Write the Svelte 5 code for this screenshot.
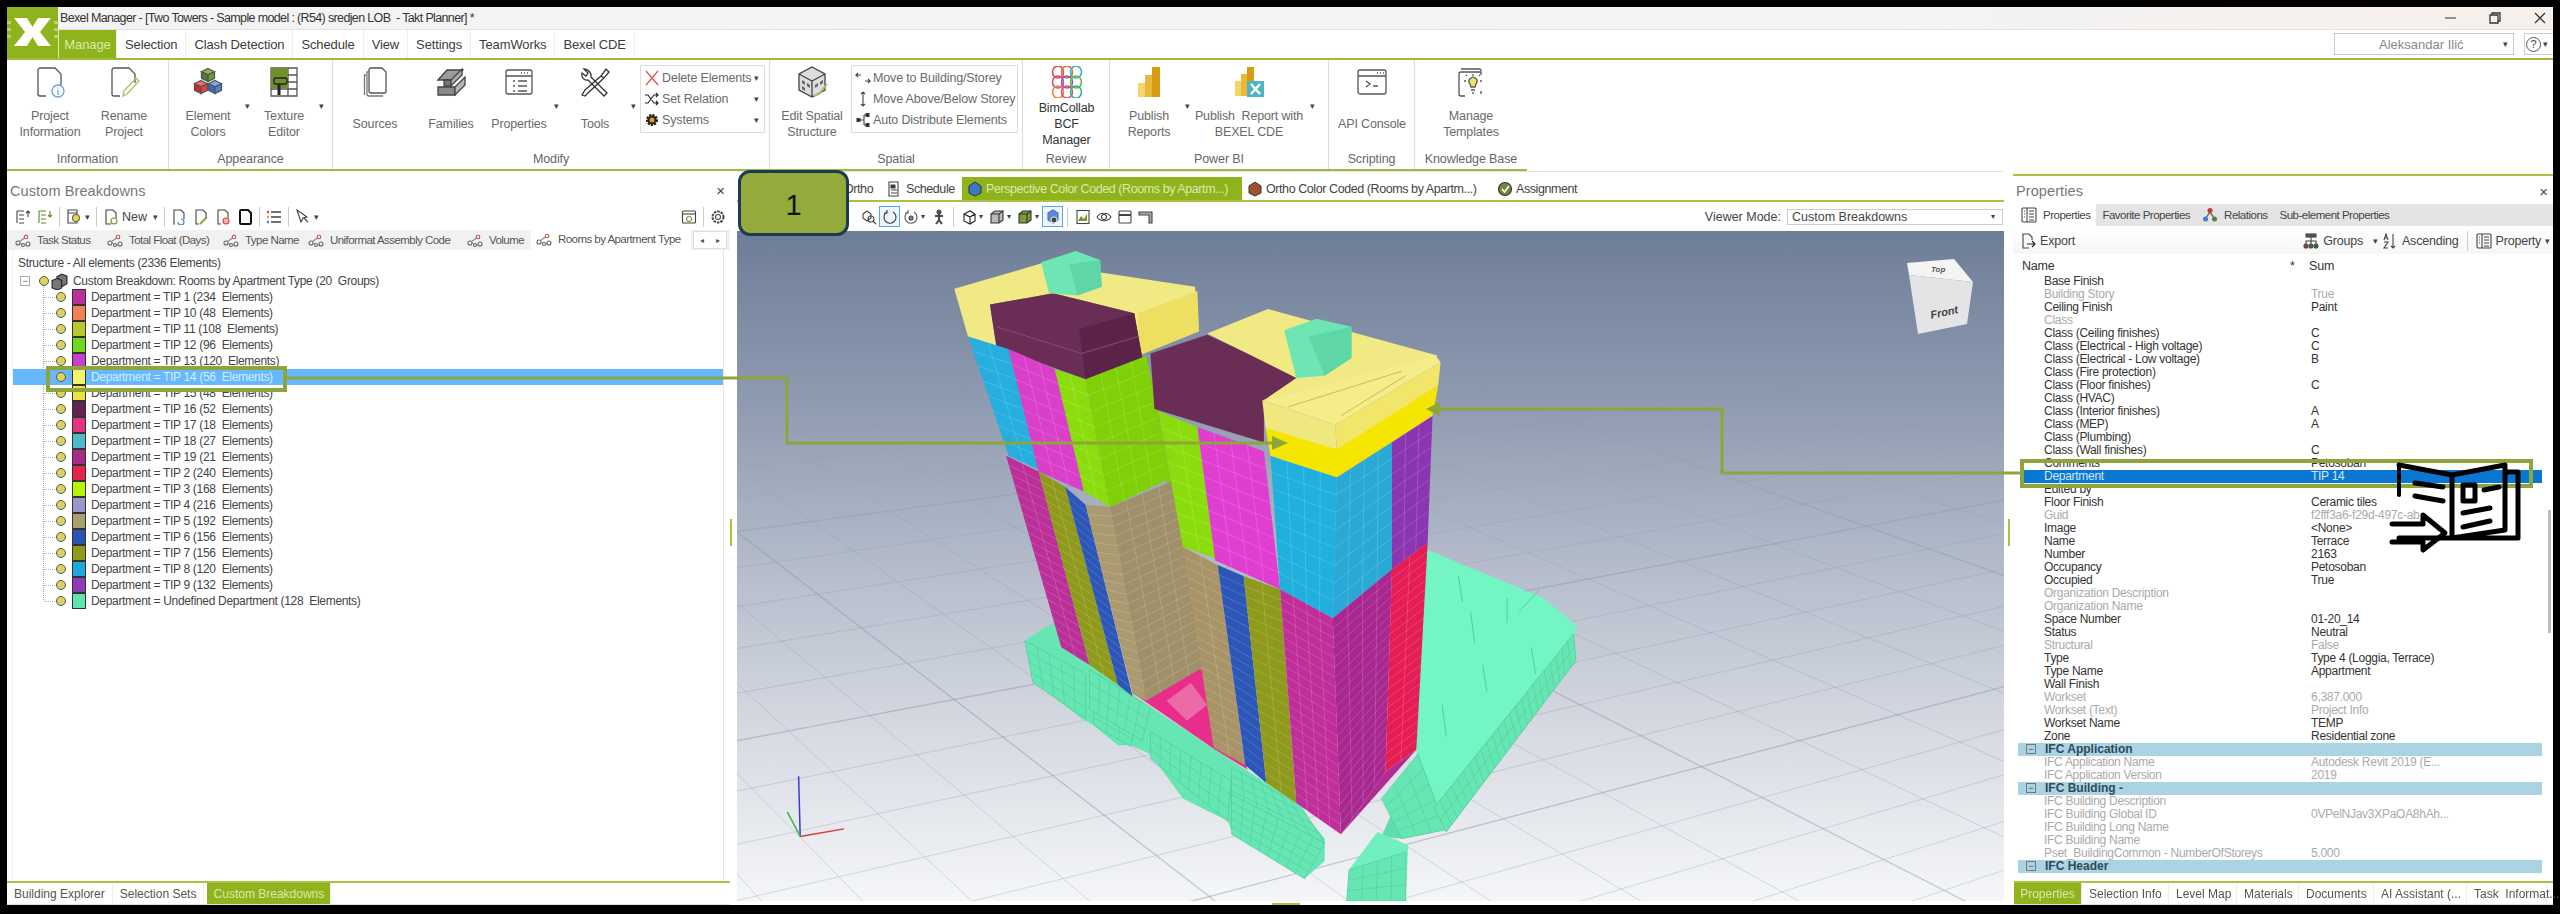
<script lang="ts">
	const mainTabs = ['Selection', 'Clash Detection', 'Schedule', 'View', 'Settings', 'TeamWorks', 'Bexel CDE'];

	// ribbon groups: w = group width, pad = left padding, items = buttons / carets / small-button boxes
	const groups = [
		{ name: 'Information', w: 162, pad: 6, items: [
			{ icon: 'info', label: ['Project', 'Information'], w: 74 },
			{ icon: 'rename', label: ['Rename', 'Project'], w: 74 }
		] },
		{ name: 'Appearance', w: 164, pad: 3, items: [
			{ icon: 'cubes', label: ['Element', 'Colors'], w: 72, caret: 6 },
			{ icon: 'texture', label: ['Texture', 'Editor'], w: 68, caret: 6 }
		] },
		{ name: 'Modify', w: 437, pad: 12, items: [
			{ icon: 'sources', label: ['Sources'], w: 60, ml: 0 },
			{ icon: 'families', label: ['Families'], w: 72, ml: 10 },
			{ icon: 'props', label: ['Properties'], w: 64, caret: 10 },
			{ icon: 'tools', label: ['Tools'], w: 68, caret: 8 },
			{ box: 125, ml: 3, rows: [['del', 'Delete Elements', true], ['rel', 'Set Relation', true], ['sys', 'Systems', true]] }
		] },
		{ name: 'Spatial', w: 253, pad: 3, items: [
			{ icon: 'spatial', label: ['Edit Spatial', 'Structure'], w: 78 },
			{ box: 167, rows: [['mv1', 'Move to Building/Storey'], ['mv2', 'Move Above/Below Storey'], ['mv3', 'Auto Distribute Elements']] }
		] },
		{ name: 'Review', w: 87, pad: 0, items: [
			{ icon: 'bim', label: ['BimCollab', 'BCF', 'Manager'], w: 87, dark: true }
		] },
		{ name: 'Power BI', w: 219, pad: 3, items: [
			{ icon: 'pbi', label: ['Publish', 'Reports'], w: 72, caret: 5 },
			{ icon: 'pbix', label: ['Publish  Report with', 'BEXEL CDE'], w: 118, caret: 8 }
		] },
		{ name: 'Scripting', w: 86, pad: 0, items: [{ icon: 'api', label: ['API Console'], w: 86 }] },
		{ name: 'Knowledge Base', w: 112, pad: 0, items: [{ icon: 'tmpl', label: ['Manage', 'Templates'], w: 112 }] }
	];

	const breakTabs = [
		{ t: 'Task Status', w: 92 },
		{ t: 'Total Float (Days)', w: 116 },
		{ t: 'Type Name', w: 85 },
		{ t: 'Uniformat Assembly Code', w: 159 },
		{ t: 'Volume', w: 62 }
	];

	const tree = [
		['TIP 1 (234  Elements)', '#b92f9c'], ['TIP 10 (48  Elements)', '#ef8354'], ['TIP 11 (108  Elements)', '#bcc72b'],
		['TIP 12 (96  Elements)', '#71d821'], ['TIP 13 (120  Elements)', '#c93fcb'], ['TIP 14 (56  Elements)', '#f3f26e'],
		['TIP 15 (48  Elements)', '#eee23c'], ['TIP 16 (52  Elements)', '#62254f'], ['TIP 17 (18  Elements)', '#e5317f'],
		['TIP 18 (27  Elements)', '#4cbccb'], ['TIP 19 (21  Elements)', '#a92b86'], ['TIP 2 (240  Elements)', '#e8234f'],
		['TIP 3 (168  Elements)', '#b5f500'], ['TIP 4 (216  Elements)', '#9a97cf'], ['TIP 5 (192  Elements)', '#ab9f6e'],
		['TIP 6 (156  Elements)', '#2b55b5'], ['TIP 7 (156  Elements)', '#8f9a1c'], ['TIP 8 (120  Elements)', '#1fa8dc'],
		['TIP 9 (132  Elements)', '#8f3db5'], ['Undefined Department (128  Elements)', '#5fe6ae']
	];

	// the first tab's caption sits under the "1" badge in the reference
	const viewTabs = [
		{ t: '', w: 83, i: '#7a8aa0' },
		{ t: 'Ortho', w: 62, i: '#7a8aa0' },
		{ t: 'Schedule', w: 80, i: 'sched' },
		{ t: 'Perspective Color Coded (Rooms by Apartm...)', w: 280, i: '#3a78c8', on: true },
		{ t: 'Ortho Color Coded (Rooms by Apartm...)', w: 250, i: '#a0522d' },
		{ t: 'Assignment', w: 90, i: 'assign' }
	];

	// name, value, dim; null value = empty
	const props = [
		['Base Finish', ''], ['Building Story', 'True', 1], ['Ceiling Finish', 'Paint'], ['Class', '', 1],
		['Class (Ceiling finishes)', 'C'], ['Class (Electrical - High voltage)', 'C'], ['Class (Electrical - Low voltage)', 'B'],
		['Class (Fire protection)', ''], ['Class (Floor finishes)', 'C'], ['Class (HVAC)', ''], ['Class (Interior finishes)', 'A'],
		['Class (MEP)', 'A'], ['Class (Plumbing)', ''], ['Class (Wall finishes)', 'C'], ['Comments', 'Petosoban'],
		['Department', 'TIP 14', 2], ['Edited by', ''], ['Floor Finish', 'Ceramic tiles'], ['Guid', 'f2fff3a6-f29d-497c-ab...', 1],
		['Image', '<None>'], ['Name', 'Terrace'], ['Number', '2163'], ['Occupancy', 'Petosoban'], ['Occupied', 'True'],
		['Organization Description', '', 1], ['Organization Name', '', 1], ['Space Number', '01-20_14'], ['Status', 'Neutral'],
		['Structural', 'False', 1], ['Type', 'Type 4 (Loggia, Terrace)'], ['Type Name', 'Appartment'], ['Wall Finish', ''],
		['Workset', '6,387.000', 1], ['Workset (Text)', 'Project Info', 1], ['Workset Name', 'TEMP'], ['Zone', 'Residential zone'],
		['IFC Application', '', 3], ['IFC Application Name', 'Autodesk Revit 2019 (E...', 1], ['IFC Application Version', '2019', 1],
		['IFC Building -', '', 3], ['IFC Building Description', '', 1], ['IFC Building Global ID', '0VPelNJav3XPaOA8hAh...', 1],
		['IFC Building Long Name', '', 1], ['IFC Building Name', '', 1], ['Pset_BuildingCommon - NumberOfStoreys', '5.000', 1],
		['IFC Header', '', 3]
	];

	const propTabs = [
		{ t: 'Selection Info', w: 87 }, { t: 'Level Map', w: 68 }, { t: 'Materials', w: 62 },
		{ t: 'Documents', w: 75 }, { t: 'AI Assistant (...', w: 93 }, { t: 'Task  Informat...', w: 80 }
	];

	// 3D model, in a 1563 x 1505 drawing space squeezed to the viewport
	const podium = [
		{ q: [[365, 945], [440, 1020], [440, 1120], [375, 1040]], nu: 5, nv: 4 },
		{ q: [[450, 1100], [500, 1150], [495, 1182], [450, 1135]], nu: 3, nv: 2 },
		{ q: [[445, 1010], [520, 1095], [510, 1170], [445, 1100]], nu: 6, nv: 3 },
		{ q: [[520, 1150], [620, 1260], [615, 1350], [520, 1210]], nu: 8, nv: 3 },
		{ q: [[620, 1230], [705, 1315], [735, 1400], [620, 1300]], nu: 7, nv: 4 },
		{ q: [[620, 1290], [735, 1400], [710, 1480], [620, 1380]], nu: 8, nv: 5 },
		{ q: [[805, 1300], [850, 1200], [885, 1370], [830, 1390]], nu: 3, nv: 5 },
		{ q: [[870, 1320], [1042, 930], [1045, 990], [885, 1375]], nu: 24, nv: 2 },
		{ q: [[765, 1460], [835, 1420], [835, 1530], [762, 1530]], nu: 4, nv: 3 }
	];
	const facades = [
		{ q: [[295, 262], [345, 290], [382, 560], [345, 530]], c: '#25aede', nu: 2, nv: 8 },
		{ q: [[345, 290], [402, 335], [438, 610], [382, 565]], c: '#d93fc8', nu: 3, nv: 8 },
		{ q: [[402, 335], [440, 358], [470, 645], [438, 610]], c: '#8bdc0c', nu: 2, nv: 8 },
		{ q: [[440, 358], [515, 305], [540, 585], [470, 645]], c: '#7fd006', nu: 4, nv: 8 },
		{ q: [[342, 530], [382, 565], [445, 1000], [410, 960]], c: '#bb2f98', nu: 2, nv: 20 },
		{ q: [[382, 565], [415, 600], [480, 1045], [445, 1000]], c: '#8f9a1c', nu: 2, nv: 20 },
		{ q: [[415, 600], [440, 640], [498, 1070], [480, 1045]], c: '#2c57b8', nu: 1, nv: 20 },
		{ q: [[440, 640], [470, 645], [515, 1080], [498, 1065]], c: '#ab9a70', nu: 1, nv: 20 },
		{ q: [[470, 645], [550, 585], [585, 1005], [515, 1080]], c: '#a0906a', nu: 4, nv: 20 },
		{ q: [[530, 430], [578, 465], [600, 760], [560, 735]], c: '#8bdc0c', nu: 2, nv: 8 },
		{ q: [[578, 465], [660, 520], [680, 830], [600, 765]], c: '#e03ed0', nu: 4, nv: 8 },
		{ q: [[560, 735], [603, 775], [637, 1225], [598, 1185]], c: '#a99468', nu: 2, nv: 20 },
		{ q: [[603, 775], [635, 800], [663, 1265], [637, 1225]], c: '#2c57b8', nu: 1, nv: 20 },
		{ q: [[635, 800], [680, 830], [700, 1310], [663, 1265]], c: '#8f9a1c', nu: 2, nv: 20 },
		{ q: [[668, 530], [750, 578], [745, 895], [680, 830]], c: '#1fb0de', nu: 4, nv: 8 },
		{ q: [[750, 578], [818, 500], [818, 785], [745, 895]], c: '#2aa9d6', nu: 4, nv: 8 },
		{ q: [[818, 500], [868, 440], [862, 725], [818, 785]], c: '#8b35b0', nu: 3, nv: 8 },
		{ q: [[680, 830], [745, 895], [755, 1380], [700, 1310]], c: '#c02e9a', nu: 4, nv: 22 },
		{ q: [[745, 895], [818, 785], [810, 1240], [755, 1380]], c: '#a8288f', nu: 4, nv: 22 },
		{ q: [[818, 785], [862, 725], [848, 1190], [810, 1240]], c: '#e51d55', nu: 2, nv: 22 }
	];
	const lerp = (a: number[], b: number[], t: number) => [a[0] + (b[0] - a[0]) * t, a[1] + (b[1] - a[1]) * t];
	const quadLines = (f: any) => {
		const out: number[][][] = [];
		const [a, b, c, d] = f.q;
		for (let i = 1; i < f.nu; i++) out.push([lerp(a, b, i / f.nu), lerp(d, c, i / f.nu)]);
		for (let j = 1; j < f.nv; j++) out.push([lerp(a, d, j / f.nv), lerp(b, c, j / f.nv)]);
		return out;
	};
	const pts = (q: number[][]) => q.map((p) => p.join(',')).join(' ');

	const floor: number[][] = [];
	for (let i = 0; i < 26; i++) floor.push([10, 240 + i * 14 + i * i * 3.2, 4684, -447, i % 5 === 0 ? 1 : 0]);
	for (let i = 0; i < 26; i++) floor.push([-500 + i * 60 + i * i * 5, 1530, -1200, -1000, i % 5 === 0 ? 1 : 0]);
</script>

{#snippet cube(x: number, y: number, s: number, top: string, left: string, right: string)}
	<polygon points="{x},{y - s} {x + s},{y - s / 2} {x},{y} {x - s},{y - s / 2}" fill={top} />
	<polygon points="{x - s},{y - s / 2} {x},{y} {x},{y + s} {x - s},{y + s / 2}" fill={left} />
	<polygon points="{x + s},{y - s / 2} {x},{y} {x},{y + s} {x + s},{y + s / 2}" fill={right} />
{/snippet}

{#snippet ico(name: string)}
	<svg viewBox="0 0 32 32" class="ico" fill="none" stroke="#555" stroke-width="1.3">
		{#if name === 'info'}
			<path d="M12 30H6a2 2 0 0 1-2-2V4a2 2 0 0 1 2-2h15l6 6v11" />
			<circle cx="24" cy="25" r="6" stroke="#6d9fe4" />
			<path d="M24 24v5M24 21.5v1" stroke="#6d9fe4" />
		{:else if name === 'rename'}
			<path d="M12 30H6a2 2 0 0 1-2-2V4a2 2 0 0 1 2-2h15l6 6v9" />
			<path d="M15 30l1-5 12-13 3 3-12 13z" stroke="#a9bd6a" />
		{:else if name === 'cubes'}
			{@render cube(16, 9, 6.5, '#8db25a', '#55782f', '#6d9640')}
			{@render cube(9, 21, 6.5, '#f46a6a', '#d12a2a', '#e83f3f')}
			{@render cube(23, 21, 6.5, '#7aa9ef', '#3a6bc4', '#4f82da')}
		{:else if name === 'texture'}
			<path d="M3 2h26v28H3zM3 9h26M3 16h26M3 23h26M20 2v28" />
			<rect x="3" y="2" width="17" height="20" fill="#6f8f2c" stroke="none" />
			<rect x="6" y="12" width="13" height="6" rx="2" stroke="#222" />
			<path d="M11 18v11" stroke="#222" stroke-width="3" />
		{:else if name === 'sources'}
			<path d="M12 2h11l4 4v20a1 1 0 0 1-1 1H12a2 2 0 0 1-2-2V4a2 2 0 0 1 2-2z" />
			<path d="M10 6H8v22a2 2 0 0 0 2 2h14M7 9H5.500v20" stroke="#777" />
		{:else if name === 'families'}
			<polygon points="3,14 12,4 28,4 20,14" fill="#9c9c9c" stroke="#444" />
			<polygon points="9,14 16,14 16,20 9,20" fill="#777" stroke="#444" />
			<polygon points="16,14 27,3 27,9 16,20" fill="#aaa" stroke="#444" />
			<polygon points="3,21 20,21 20,29 3,29" fill="#8a8a8a" stroke="#444" />
			<polygon points="20,21 30,11 30,19 20,29" fill="#b5b5b5" stroke="#444" />
		{:else if name === 'props'}
			<rect x="3" y="4" width="26" height="24" rx="2" />
			<path d="M3 10h26M21 7h1M24 7h1M18 7h1M10 15h2M15 15h9M10 20h2M15 20h9M10 25h2M15 25h9" />
		{:else if name === 'tools'}
			<path d="M5 3l4 4-2 3-4-3c-1 4 2 8 6 7l16 16 3-3L12 11c1-4-3-8-7-8z" stroke="#333" />
			<path d="M27 3l3 3-5 6-3-2zM22 10L6 24l-3 5 3 1 4-4 15-14" stroke="#333" />
		{:else if name === 'spatial'}
			<polygon points="16,1 29,8 29,24 16,31 3,24 3,8" fill="#ddd" stroke="#444" />
			<path d="M3 8l13 7 13-7M16 15v16" stroke="#444" />
			<path d="M6 14l3 2v3l-3-2zM11 17l3 2v3l-3-2zM6 20l3 2v3l-3-2zM19 19l3-2v3l-3 2zM24 16l3-2v3l-3 2z" fill="#666" stroke="none" />
			<path d="M18 30l5-2 8-10" stroke="#a9bd6a" stroke-width="2" />
		{:else if name === 'bim'}
			{#each [[7, 6, '#e04a3a'], [16, 6, '#e86a3a'], [25, 6, '#35b2c2'], [7, 16, '#d6477f'], [16, 16, '#7f5bb8'], [25, 16, '#65b84a'], [7, 26, '#e8873a'], [16, 26, '#e04a7f'], [25, 26, '#3ab57a']] as c}
				<ellipse cx={c[0]} cy={c[1]} rx="5.500" ry="6" stroke={c[2]} stroke-width="1.6" />
			{/each}
		{:else if name === 'pbi'}
			<rect x="5" y="17" width="8" height="14" fill="#f2d56b" stroke="none" />
			<rect x="12" y="9" width="8" height="22" fill="#e8b83a" stroke="none" />
			<rect x="19" y="1" width="8" height="30" fill="#d99a14" stroke="none" />
		{:else if name === 'pbix'}
			<rect x="2" y="15" width="7" height="15" fill="#f2d56b" stroke="none" />
			<rect x="8" y="8" width="7" height="22" fill="#e8b83a" stroke="none" />
			<rect x="14" y="1" width="7" height="22" fill="#d99a14" stroke="none" />
			<rect x="14" y="15" width="17" height="16" fill="#4fb4bf" stroke="none" />
			<path d="M18 18l9 10M27 18l-9 10" stroke="#fff" stroke-width="2.500" />
		{:else if name === 'api'}
			<rect x="2" y="4" width="28" height="24" rx="2" />
			<path d="M2 10h28M21 7h1M24 7h1M27 7h1M10 15l4 3-4 3M17 20h5" />
		{:else if name === 'tmpl'}
			<path d="M6 3h18a2 2 0 0 1 2 2M4 8a2 2 0 0 1 2-2h20v3M4 8v20a2 2 0 0 0 2 2h4M26 25v3" />
			<path d="M15 18a4 4 0 1 1 6 0l-1 3h-4z" fill="#f0e26a" />
			<path d="M16 24h4M17 27h2M18 10V8M11 15H9M27 15h-2M12 10l-1-1M24 10l1-1" />
		{/if}
	</svg>
{/snippet}

{#snippet mini(name: string)}
	<svg viewBox="0 0 16 16" class="mini" fill="none" stroke="#444" stroke-width="1.100">
		{#if name === 'del'}
			<path d="M2 1l12 14M14 1L2 15" stroke="#e2574c" stroke-width="1.300" />
		{:else if name === 'rel'}
			<path d="M1 4h3l6 8h4M1 12h3l6-8h4M12 2l2 2-2 2M12 10l2 2-2 2" stroke="#222" />
		{:else if name === 'sys'}
			<circle cx="8" cy="8" r="4.500" fill="#222" stroke="#222" stroke-width="3" stroke-dasharray="2 1" />
			<circle cx="8" cy="8" r="2.500" fill="#e69a1e" stroke="none" />
		{:else if name === 'mv1'}
			<path d="M6 5H1l2-2M1 5l2 2M10 11h5l-2-2M15 11l-2 2" />
		{:else if name === 'mv2'}
			<path d="M8 1v14M8 1L6 3M8 1l2 2M8 15l-2-2M8 15l2-2" />
		{:else if name === 'mv3'}
			<path d="M5 8h4M9 3v10M9 3h3M9 13h3" />
			<rect x="2" y="6.500" width="3" height="3" fill="#222" />
			<rect x="11" y="1.500" width="3" height="3" fill="#222" />
			<rect x="11" y="11.500" width="3" height="3" fill="#222" />
		{:else if name === 'graph'}
			<circle cx="3" cy="11" r="2" stroke="#666" />
			<circle cx="11" cy="5" r="1.800" stroke="#c0504d" />
			<circle cx="13" cy="12" r="2" stroke="#666" />
			<circle cx="8" cy="13" r="1.500" stroke="#666" />
			<path d="M4.500 9.500L9.500 6M5 11.500h1.500M9.500 13H11" stroke="#888" />
		{:else if name === 'expU'}
			<path d="M2 2h7M2 2v12M4 6h5M4 10h5M4 14h5M13 8V2M11 4l2-2 2 2" stroke="#444" />
		{:else if name === 'expD'}
			<path d="M2 2h7M2 2v12M4 6h5M4 10h5M4 14h5M13 2v6M11 6l2 2 2-2" stroke="#5a8a2a" />
		{:else if name === 'bulb'}
			<path d="M2 1h9v13H2zM2 4h9" />
			<circle cx="10" cy="9" r="3.500" fill="#e8d84a" stroke="#666" />
		{:else if name === 'docAdd'}
			<path d="M8 15H3V1h7l3 3v5" />
			<circle cx="11" cy="12" r="3" stroke="#6f9a2a" />
		{:else if name === 'docRef'}
			<path d="M4 15H3V1h7l3 3v6" />
			<path d="M7 13a3 3 0 1 0 3-3" stroke="#3a7ed0" />
		{:else if name === 'docEdit'}
			<path d="M6 15H3V1h7l3 3v6" />
			<path d="M7 15l7-7" stroke="#8aa83a" stroke-width="2" />
		{:else if name === 'docDel'}
			<path d="M6 15H3V1h7l3 3v5" />
			<circle cx="11" cy="12" r="3" stroke="#d94a3a" fill="#f6b6a8" />
		{:else if name === 'docBlack'}
			<path d="M4 1h7l3 3v10a1 1 0 0 1-1 1H4a1 1 0 0 1-1-1V2a1 1 0 0 1 1-1z" stroke="#111" stroke-width="2" />
		{:else if name === 'list'}
			<path d="M5 3h10M5 8h10M5 13h10" stroke="#444" stroke-width="1.600" />
			<path d="M1 3h2" stroke="#d94a3a" stroke-width="2.500" />
			<path d="M1 8h2" stroke="#e8a03a" stroke-width="2.500" />
			<path d="M1 13h2" stroke="#4a7ed0" stroke-width="2.500" />
		{:else if name === 'cursor'}
			<path d="M2 1l4 12 2-4 4-1z" />
			<path d="M9 9l4 4" />
		{:else if name === 'gear'}
			<circle cx="8" cy="8" r="5.500" stroke-dasharray="2.500 1" stroke-width="2" />
			<circle cx="8" cy="8" r="2.500" />
		{:else if name === 'win'}
			<rect x="1.500" y="2" width="13" height="12" rx="1" />
			<path d="M1.500 5h13" />
			<circle cx="8" cy="10" r="2.500" stroke="#7a9a3a" />
		{:else if name === 'export'}
			<path d="M12 7V4L9 1H3v14h6" />
			<path d="M7 11h8M12 8l3 3-3 3" stroke="#222" />
		{:else if name === 'groups'}
			<rect x="3" y="1" width="10" height="3" fill="#555" />
			<path d="M8 4v5M3 12V8h10v4M8 8v4" />
			<circle cx="3" cy="13" r="2" fill="#c0392b" />
			<circle cx="8" cy="13" r="2" fill="#2e7d32" />
			<circle cx="13" cy="13" r="2" fill="#555" />
		{:else if name === 'sort'}
			<path d="M2 7l2-6 2 6M3 5h2M2 9h4l-4 6h4M11 1v14M9 13l2 2 2-2" />
		{:else if name === 'propgrid'}
			<rect x="1" y="1" width="14" height="14" rx="1" />
			<path d="M6 1v14M3 4h1M3 7h1M3 10h1M8 4h5M8 7h5M8 10h5M8 13h5" />
		{:else if name === 'rels'}
			<path d="M8 5L4 11M8 5l4 6" />
			<circle cx="8" cy="3.500" r="2.500" fill="#c0392b" stroke="none" />
			<circle cx="3.500" cy="12" r="2.500" fill="#3a7ed0" stroke="none" />
			<circle cx="12.500" cy="12" r="2.500" fill="#4c8c2b" stroke="none" />
		{:else if name === 'sched'}
			<path d="M2 1h9v14H2z" />
			<path d="M4 4h4v3H4zM4 9h6M4 12h6" fill="#333" />
		{:else if name === 'assign'}
			<circle cx="8" cy="8" r="6.500" fill="#6e8a3a" stroke="#333" />
			<path d="M5 8l2.500 3L12 5" stroke="#fff" stroke-width="1.600" />
		{:else if name === 'mag'}
			<path d="M2 5l4-3 4 3v4l-4 3-4-3z" />
			<circle cx="10" cy="10" r="3" />
			<path d="M12 12l3 3" />
		{:else if name === 'rot'}
			<path d="M5 3a6 6 0 1 0 6 0M5 1v3H2" stroke="#333" />
		{:else if name === 'rot2'}
			<path d="M5 3a6 6 0 1 0 6 0M5 1v3H2" stroke="#555" />
			<circle cx="8" cy="9" r="2" fill="#888" />
		{:else if name === 'person'}
			<circle cx="8" cy="3" r="2" fill="#555" />
			<path d="M8 5v6M4 7h8M8 11l-3 4M8 11l3 4" stroke-width="2" />
		{:else if name === 'boxW'}
			<path d="M3 5l6-3 5 3v7l-5 3-6-3zM3 5l6 3 5-3M9 8v7" stroke="#222" />
		{:else if name === 'boxF'}
			<path d="M2 5l4-3h8v9l-4 3H2z" fill="#bbb" stroke="#333" />
			<path d="M2 5h8v9M10 5l4-3" stroke="#333" />
		{:else if name === 'boxG'}
			<path d="M2 5l4-3h8v9l-4 3H2z" fill="#7c9a3a" stroke="#333" />
			<path d="M2 5h8v9M10 5l4-3" stroke="#333" />
		{:else if name === 'hex'}
			<path d="M3 4l5-3 5 3v7l-5 3-5-3z" fill="#5a8ad8" stroke="#4a70b8" />
			<circle cx="9" cy="11" r="3" fill="#444" stroke="#ddd" />
		{:else if name === 'chart'}
			<rect x="2" y="1.500" width="12" height="13" />
			<path d="M3 12l3-5 3 3 3-5v7z" fill="#6f9a2a" stroke="none" />
		{:else if name === 'eye'}
			<path d="M1 8c3-5 11-5 14 0-3 5-11 5-14 0z" />
			<circle cx="8" cy="8" r="2.500" />
		{:else if name === 'panel'}
			<rect x="2" y="2" width="12" height="12" rx="1" />
			<path d="M2 6h12" stroke-width="2" />
		{:else if name === 'corner'}
			<path d="M1 3h13v11h-3V6H1z" fill="#aaa" />
		{/if}
	</svg>
{/snippet}

<div class="frame">
	<div class="window">
		<header class="head">
			<div class="logo">
				<svg viewBox="0 0 51 51" width="51" height="51">
					<path d="M0 14h4v3H0zM0 21h4v3H0zM0 28h4v3H0zM47 14h4v3h-4zM47 21h4v3h-4zM47 28h4v3h-4z" fill="#b9d36a" />
					<polygon points="7,11 20,11 25.500,20 31,11 44,11 33,25 44,39 31,39 25.500,30 20,39 7,39 18,25" fill="#fff" />
				</svg>
			</div>
			<div class="head-main">
				<div class="titlebar">
					<span class="title">Bexel Manager - [Two Towers - Sample model : (R54) sredjen LOB  - Takt Planner] *</span>
					<div class="winbtns">
						<svg viewBox="0 0 14 14" width="14" height="14"><path d="M2 7h11" stroke="#333" fill="none" /></svg>
						<svg viewBox="0 0 14 14" width="14" height="14"><path d="M2 4h8v8H2zM4 4V2h8v8h-2" stroke="#333" stroke-width="1.300" fill="none" /></svg>
						<svg viewBox="0 0 14 14" width="14" height="14"><path d="M2 2l10 10M12 2L2 12" stroke="#333" stroke-width="1.300" fill="none" /></svg>
					</div>
				</div>
				<div class="tabs-row">
					<span class="main-tab on">Manage</span>
					{#each mainTabs as t}
						<span class="main-tab">{t}</span>
					{/each}
					<div class="user">
						<span class="user-name">Aleksandar Ilić</span>
						<span class="caret">▾</span>
					</div>
					<div class="help"><span class="help-q">?</span><span class="caret">▾</span></div>
				</div>
			</div>
		</header>

		<div class="ribbon">
			{#each groups as g}
				<section class="group" style="width:{g.w}px">
					<div class="group-items" style="padding-left:{g.pad}px">
						{#each g.items as it}
							{#if it.box}
								<div class="smallbox" style="width:{it.box}px;margin-left:{it.ml ?? 0}px">
									{#each it.rows as r}
										<div class="small-row">
											{@render mini(r[0] as string)}
											<span class="small-text">{r[1]}</span>
											{#if r[2]}<span class="caret small-caret">▾</span>{/if}
										</div>
									{/each}
								</div>
							{:else}
								<div class="rib-btn" style="width:{it.w}px;margin-left:{it.ml ?? 0}px">
									<div class="rib-icon">{@render ico(it.icon as string)}</div>
									<div class="rib-label" class:dark={it.dark}>
										{#each it.label as l}<span>{l}</span>{/each}
									</div>
								</div>
								{#if it.caret}
									<span class="rib-caret" style="width:{it.caret}px">▾</span>
								{/if}
							{/if}
						{/each}
					</div>
					<div class="group-name">{g.name}</div>
				</section>
			{/each}
		</div>

		<main class="work">
			<aside class="left">
				<div class="panel-title">
					<span>Custom Breakdowns</span>
					<span class="close">×</span>
				</div>
				<div class="tb">
					{@render mini('expU')}
					{@render mini('expD')}
					<i class="sep"></i>
					{@render mini('bulb')}<span class="caret">▾</span>
					<i class="sep"></i>
					{@render mini('docAdd')}<span class="tb-text">New</span><span class="caret new-caret">▾</span>
					<i class="sep"></i>
					{@render mini('docRef')}
					{@render mini('docEdit')}
					{@render mini('docDel')}
					{@render mini('docBlack')}
					<i class="sep"></i>
					{@render mini('list')}
					<i class="sep"></i>
					{@render mini('cursor')}<span class="caret">▾</span>
					<span class="tb-fill"></span>
					{@render mini('win')}
					<i class="sep"></i>
					{@render mini('gear')}
				</div>
				<div class="break-tabs">
					{#each breakTabs as b}
						<span class="break-tab" style="width:{b.w}px">{@render mini('graph')}<span>{b.t}</span></span>
					{/each}
					<span class="break-tab active">{@render mini('graph')}<span>Rooms by Apartment Type</span></span>
					<span class="arrows"><b>◂</b><b>▸</b></span>
				</div>
				<div class="tree">
					<div class="tree-line"></div>
					<div class="row struct">Structure - All elements (2336 Elements)</div>
					<div class="row rootrow">
						<span class="minus">−</span>
						<span class="bulb"></span>
						<svg viewBox="0 0 16 16" width="17" height="17" class="stack"><path d="M1 7l5-2 4 2v7l-4 2-5-2z M5 4l5-3 5 2v7l-5 3" fill="#777" stroke="#222" /></svg>
						<span>Custom Breakdown: Rooms by Apartment Type (20  Groups)</span>
					</div>
					{#each tree as r, i}
						<div class="row leaf" class:sel={i === 5}>
							<span class="dots"></span>
							<span class="bulb"></span>
							<span class="swatch" style="background:{r[1]}"></span>
							<span>Department = {r[0]}</span>
						</div>
					{/each}
				</div>
				<nav class="bottom-tabs left-tabs">
					<span class="btab">Building Explorer</span>
					<span class="btab">Selection Sets</span>
					<span class="btab on">Custom Breakdowns</span>
				</nav>
			</aside>

			<div class="split"><i></i></div>

			<section class="center">
				<div class="view-tabs">
					{#each viewTabs as v}
						<span class="view-tab" class:on={v.on} style="width:{v.w}px">
							{#if v.i === 'sched' || v.i === 'assign'}
								{@render mini(v.i)}
							{:else}
								<svg viewBox="0 0 16 16" class="mini"><path d="M8 1l6 4v7l-6 3-6-3V5z" fill={v.i} stroke="#333" /></svg>
							{/if}
							<span>{v.t}</span>
						</span>
					{/each}
				</div>
				<div class="view-tb">
					<span class="vt selected">{@render mini('cursor')}</span>
					<span class="vt-gap"></span>
					<span class="vt">{@render mini('mag')}</span>
					<span class="vt selected">{@render mini('rot')}</span>
					<span class="vt">{@render mini('rot2')}</span><span class="caret">▾</span>
					<span class="vt">{@render mini('person')}</span>
					<i class="sep"></i>
					<span class="vt">{@render mini('boxW')}</span><span class="caret">▾</span>
					<span class="vt">{@render mini('boxF')}</span><span class="caret">▾</span>
					<span class="vt">{@render mini('boxG')}</span><span class="caret">▾</span>
					<span class="vt selected">{@render mini('hex')}</span>
					<i class="sep"></i>
					<span class="vt">{@render mini('chart')}</span>
					<span class="vt">{@render mini('eye')}</span>
					<span class="vt">{@render mini('panel')}</span>
					<span class="vt">{@render mini('corner')}</span>
					<span class="tb-fill"></span>
					<span class="vm-label">Viewer Mode:</span>
					<div class="vm-select"><span>Custom Breakdowns</span><span class="caret">▾</span></div>
				</div>
				<div class="viewport">
					<svg class="scene" viewBox="10 25 1563 1505" preserveAspectRatio="none">
						<defs>
							<linearGradient id="fade" gradientUnits="userSpaceOnUse" x1="0" y1="100" x2="0" y2="800">
								<stop offset="0" stop-color="#8a94a8" stop-opacity="0" />
								<stop offset="1" stop-color="#8a94a8" stop-opacity=".45" />
							</linearGradient>
						</defs>
						{#each floor as l}
							<line x1={l[0]} y1={l[1]} x2={l[2]} y2={l[3]} stroke="url(#fade)" stroke-width={l[4] ? 1.4 : 0.7} vector-effect="non-scaling-stroke" />
						{/each}

						<!-- podium -->
						<polygon points="860,740 1005,850 1045,910 1040,990 1000,1090 950,1190 885,1375 850,1290 848,1190" fill="#74f5c4" />
						<polygon points="1042,930 1045,990 885,1375 870,1320" fill="#5fdcaa" />
						<polygon points="400,905 445,1000 500,1070 700,1310 735,1390 735,1440 710,1480 622,1380 615,1350 560,1300 520,1200 495,1180 480,1180 450,1135 435,1120 385,1050 365,945" fill="#66e6b2" />
						<polygon points="805,1385 850,1200 885,1370 830,1390" fill="#62dcac" />
						<polygon points="765,1460 800,1375 838,1405 835,1530 762,1530" fill="#70f0c0" />
						{#each podium as f}
							<polygon points={pts(f.q)} fill="#66e6b2" stroke="#3fb88a" stroke-opacity=".5" stroke-width=".8" vector-effect="non-scaling-stroke" />
							{#each quadLines(f) as l}
								<line x1={l[0][0]} y1={l[0][1]} x2={l[1][0]} y2={l[1][1]} stroke="#3fb88a" stroke-opacity=".4" stroke-width=".8" vector-effect="non-scaling-stroke" />
							{/each}
						{/each}
						{#each [[900, 800, 905, 860], [960, 850, 960, 905], [915, 880, 920, 950], [930, 1000, 935, 1060], [990, 960, 995, 1020], [880, 1090, 885, 1160], [1000, 830, 975, 880]] as t}
							<line x1={t[0]} y1={t[1]} x2={t[2]} y2={t[3]} stroke="#4fcfa0" stroke-width="1" vector-effect="non-scaling-stroke" />
						{/each}

						<!-- fill behind the gap between the towers -->
						<polygon points="515,305 530,430 560,735 540,585" fill="#7fd006" />
						<polygon points="540,585 560,735 598,1185 585,1005" fill="#a99468" />

						<!-- pink core between the towers -->
						<polygon points="500,1065 555,1005 585,1010 640,1235 600,1190" fill="#e82d8a" />
						<polygon points="540,1080 570,1040 590,1090 565,1125" fill="#ec6aa5" />

						<!-- back tower cap -->
						<polygon points="278,155 385,98 575,150 580,250 505,305 500,210 400,165 322,190 330,285 295,262" fill="#f1e984" />
						<polygon points="505,210 578,160 580,250 505,305" fill="#ecdf62" />
						<polygon points="322,190 400,165 500,210 510,310 440,358 330,285" fill="#6a2d55" />
						<polygon points="432,245 500,210 510,310 440,358" fill="#5c2349" />
						<path d="M330 240L435 300L505 262" stroke="#8a4a70" fill="none" vector-effect="non-scaling-stroke" />
						<polygon points="385,95 428,70 458,90 460,150 430,170 395,165" fill="#6fe5b4" />
						<polygon points="420,100 458,90 460,150 430,170" fill="#5ed6a6" />

						{#each facades as f}
							<polygon points={pts(f.q)} fill={f.c} />
							{#each quadLines(f) as l}
								<line x1={l[0][0]} y1={l[0][1]} x2={l[1][0]} y2={l[1][1]} stroke="#fff" stroke-opacity=".2" stroke-width=".8" vector-effect="non-scaling-stroke" />
							{/each}
						{/each}
						<polygon points="810,1240 848,1190 755,1380" fill="#b12b95" />

						<!-- front tower cap -->
						<polygon points="520,300 590,258 705,355 660,405 660,500 525,425" fill="#6a2d55" />
						<polygon points="590,255 665,200 875,305 660,405 700,355" fill="#f1e984" />
						<polygon points="685,248 725,222 768,240 768,310 735,350 700,355" fill="#6fe5b4" />
						<polygon points="715,262 768,240 768,310 735,350" fill="#5ed6a6" />
						<polygon points="658,405 872,305 878,320 748,460" fill="#f5ec8a" />
						<polygon points="658,405 748,460 750,520 662,468" fill="#efe87f" />
						<polygon points="748,460 878,320 875,372 750,520" fill="#f2e66a" />
						<polygon points="662,468 750,515 875,372 868,440 750,578 668,530" fill="#f5e600" />
						<path d="M690 420L830 340M755 440L835 350" stroke="#c9bf50" fill="none" vector-effect="non-scaling-stroke" />

						<!-- axes -->
						<path d="M88 1385L86 1250" stroke="#3a3ad8" stroke-width="1.500" fill="none" vector-effect="non-scaling-stroke" />
						<path d="M88 1385L142 1368" stroke="#d83a3a" stroke-width="1.500" fill="none" vector-effect="non-scaling-stroke" />
						<path d="M88 1385L72 1330" stroke="#3ab83a" stroke-width="1.500" fill="none" vector-effect="non-scaling-stroke" />
					</svg>
					<svg class="navcube" viewBox="1905 255 76 84" width="76" height="84">
						<polygon points="1911,263 1958,259 1977,282 1913,275" fill="#f4f4f4" />
						<polygon points="1913,275 1977,282 1971,324 1922,334" fill="#e4e4e6" />
						<text x="1935" y="272" class="cube-top">Top</text>
						<text x="1934" y="316" class="cube-front" transform="rotate(-12 1948 312)">Front</text>
					</svg>
				</div>
				<div class="split-h"><i></i></div>
			</section>

			<div class="split"><i></i></div>

			<aside class="right">
				<div class="panel-title greenline">
					<span>Properties</span>
					<span class="close">×</span>
				</div>
				<div class="prop-tabs">
					<span class="ptab active">{@render mini('propgrid')}Properties</span>
					<span class="ptab">Favorite Properties</span>
					<span class="ptab">{@render mini('rels')}Relations</span>
					<span class="ptab">Sub-element Properties</span>
				</div>
				<div class="prop-tb">
					{@render mini('export')}<span>Export</span>
					<span class="tb-fill"></span>
					{@render mini('groups')}<span>Groups</span><span class="caret groups-caret">▾</span>
					{@render mini('sort')}<span>Ascending</span>
					<i class="sep"></i>
					{@render mini('propgrid')}<span>Property</span><span class="caret">▾</span>
				</div>
				<div class="prop-head">
					<span class="pname">Name</span>
					<span class="star">*</span>
					<span>Sum</span>
				</div>
				<div class="prop-list">
					{#each props as p}
						{#if p[2] === 3}
							<div class="prow section"><span class="toggle">−</span>{p[0]}</div>
						{:else}
							<div class="prow" class:dim={p[2] === 1} class:sel={p[2] === 2}>
								<span class="pname">{p[0]}</span>
								<span>{p[1]}</span>
							</div>
						{/if}
					{/each}
				</div>
				<i class="thumb"></i>
				<nav class="bottom-tabs">
					<span class="btab on">Properties</span>
					{#each propTabs as t}
						<span class="btab" style="width:{t.w}px">{t.t}</span>
					{/each}
				</nav>
			</aside>
		</main>
	</div>

	<!-- annotations drawn on top of the screenshot -->
	<svg class="notes" viewBox="0 0 2560 914">
		<rect x="48" y="368" width="237" height="22" fill="none" stroke="#8ea53c" stroke-width="4" />
		<path d="M285 378H787V443H1274" fill="none" stroke="#8ea53c" stroke-width="3" />
		<polygon points="1272,436 1288,443 1272,450" fill="#8ea53c" />
		<rect x="2022" y="461" width="509" height="25" fill="none" stroke="#8ea53c" stroke-width="4" />
		<path d="M2022 473H1722V409H1438" fill="none" stroke="#8ea53c" stroke-width="3" />
		<polygon points="1440,402 1426,409 1440,416" fill="#8ea53c" />

		<g fill="none" stroke="#000" stroke-width="5" stroke-linecap="round" stroke-linejoin="round">
			<path d="M2399 465L2452 475V538L2399 538M2452 475L2505 465V530L2452 538M2505 472H2518V538H2452" />
			<path d="M2399 465V495" stroke-width="4" />
			<path d="M2415 483L2443 487M2415 496L2443 501" />
			<path d="M2463 485H2475V501H2463zM2484 490L2499 487M2463 513L2490 508M2463 527L2490 521" />
			<path d="M2392 524H2423V515L2445 533L2423 550V542H2392" />
		</g>
	</svg>
	<div class="badge">1</div>
</div>

<style>
	:global(body) {
		margin: 0;
		background: #000;
	}

	.frame {
		position: relative;
		height: 914px;
		box-sizing: border-box;
		padding: 7px 7px 9px;
		background: #000;
		font-family: 'Liberation Sans', Arial, sans-serif;
		font-size: 12px;
		color: #444;
		overflow: hidden;
	}

	.window {
		display: flex;
		flex-direction: column;
		height: 100%;
		background: #fff;
		filter: blur(0.4px);
	}

	.ico {
		width: 32px;
		height: 32px;
	}

	.mini {
		width: 16px;
		height: 16px;
		flex: none;
	}

	.caret {
		font-size: 9px;
		color: #444;
	}

	.sep {
		width: 1px;
		height: 20px;
		background: #ccc;
		margin: 0 6px;
		flex: none;
	}

	.tb-fill {
		flex: 1;
	}

	/* header */
	.head {
		display: flex;
		border-bottom: 2px solid #9dbb3c;
	}

	.logo {
		width: 51px;
		height: 51px;
		background: #8fb31c;
		flex: none;
	}

	.logo svg {
		display: block;
	}

	.head-main {
		flex: 1;
		min-width: 0;
	}

	.titlebar {
		display: flex;
		align-items: center;
		height: 23px;
		padding-left: 2px;
		background: linear-gradient(90deg, #f3f3f3, #f4f4f4 70%, #f6f0ec);
		border-bottom: 1px solid #e2e2e2;
		box-sizing: border-box;
	}

	.title {
		font-size: 12.500px;
		color: #333;
		white-space: pre;
		letter-spacing: -0.64px;
	}

	.winbtns {
		margin-left: auto;
		display: flex;
		gap: 31px;
		padding-right: 6px;
	}

	.tabs-row {
		display: flex;
		align-items: center;
		height: 28px;
	}

	.main-tab {
		height: 100%;
		display: flex;
		align-items: center;
		padding: 0 8px;
		font-size: 13px;
		color: #3c3c3c;
		border-right: 1px solid #eee;
		letter-spacing: -0.12px;
	}

	.main-tab.on {
		width: 59px;
		box-sizing: border-box;
		justify-content: center;
		padding: 0;
		background: #8fb31c;
		color: #dbe9ad;
		border-left: 1px solid #dbe9ad;
	}

	.user {
		margin-left: auto;
		width: 180px;
		height: 22px;
		box-sizing: border-box;
		border: 1px solid #ccc;
		display: flex;
		align-items: center;
		justify-content: space-between;
		padding: 0 5px 0 44px;
		font-size: 13px;
		color: #888;
	}

	.help {
		width: 29px;
		height: 22px;
		box-sizing: border-box;
		margin-left: 10px;
		border: 1px solid #ccc;
		border-right: 0;
		display: flex;
		align-items: center;
		gap: 2px;
		padding-left: 1px;
	}

	.help-q {
		width: 13px;
		height: 13px;
		border: 1.500px solid #555;
		border-radius: 50%;
		text-align: center;
		line-height: 13px;
		font-size: 11px;
		color: #444;
	}

	/* ribbon */
	.ribbon {
		display: flex;
		height: 111px;
		box-sizing: border-box;
		position: relative;
		flex: none;
	}

	.ribbon::after {
		content: '';
		position: absolute;
		left: 0;
		bottom: 0;
		width: 1520px;
		height: 2px;
		background: #9dbb3c;
	}

	.group {
		display: flex;
		flex-direction: column;
		border-right: 1px solid #dcdcdc;
		box-sizing: border-box;
		flex: none;
	}

	.group:last-child {
		border-right: 0;
	}

	.group-items {
		flex: 1;
		display: flex;
		align-items: flex-start;
	}

	.group-name {
		height: 21px;
		line-height: 19px;
		text-align: center;
		font-size: 12.500px;
		color: #666;
		letter-spacing: -0.1px;
	}

	.rib-btn {
		display: flex;
		flex-direction: column;
		align-items: center;
		flex: none;
		padding-top: 6px;
	}

	.rib-icon {
		height: 34px;
	}

	.rib-label {
		height: 48px;
		display: flex;
		flex-direction: column;
		justify-content: center;
		align-items: center;
		white-space: pre;
		font-size: 12.500px;
		line-height: 16px;
		color: #6a6a6a;
		letter-spacing: -0.15px;
	}

	.rib-label.dark {
		color: #333;
	}

	.rib-caret {
		flex: none;
		font-size: 9px;
		line-height: 1;
		margin-top: 42px;
		color: #444;
		text-align: center;
	}

	.smallbox {
		flex: none;
		height: 68px;
		margin-top: 5px;
		box-sizing: border-box;
		border: 1px solid #ddd;
		padding: 1px 3px;
		display: flex;
		flex-direction: column;
		justify-content: space-around;
		border-radius: 1px;
	}

	.small-row {
		display: flex;
		align-items: center;
		gap: 2px;
	}

	.small-text {
		font-size: 12.500px;
		color: #6a6a6a;
		white-space: nowrap;
		letter-spacing: -0.15px;
	}

	.small-caret {
		margin-left: auto;
		margin-right: 2px;
	}

	/* workspace */
	.work {
		flex: 1;
		min-height: 0;
		display: flex;
	}

	.left {
		width: 723px;
		flex: none;
		display: flex;
		flex-direction: column;
	}

	.split {
		flex: none;
		width: 7px;
		display: flex;
		align-items: center;
		justify-content: flex-start;
	}

	.split i {
		width: 2px;
		height: 27px;
		background: #a9c23f;
		margin-top: -12px;
	}

	.center + .split {
		width: 9px;
		justify-content: center;
	}

	.panel-title {
		height: 33px;
		flex: none;
		display: flex;
		align-items: center;
		justify-content: space-between;
		box-sizing: border-box;
		padding: 6px 5px 0 3px;
		font-size: 14.500px;
		color: #777;
		letter-spacing: 0.1px;
	}

	.close {
		color: #444;
		font-size: 15px;
	}

	.tb {
		height: 26px;
		flex: none;
		display: flex;
		align-items: center;
		gap: 6px;
		padding: 0 4px 0 8px;
		box-sizing: border-box;
	}

	.tb .sep {
		margin: 0;
	}

	.tb .caret {
		margin-left: -3px;
	}

	.tb .new-caret {
		margin-left: 0;
	}

	.tb-text {
		font-size: 12.500px;
		margin-left: -3px;
	}

	.break-tabs {
		height: 20px;
		flex: none;
		display: flex;
		align-items: center;
		padding-left: 8px;
		background: #f1f1f1;
		font-size: 11.500px;
		letter-spacing: -0.55px;
		color: #555;
		white-space: nowrap;
	}

	.break-tab {
		display: flex;
		align-items: center;
		gap: 6px;
		height: 100%;
		flex: none;
		box-sizing: border-box;
	}

	.break-tab.active {
		background: #fff;
		width: 160px;
		margin-left: 2px;
		padding-left: 5px;
		gap: 6px;
		margin-top: -2px;
		height: 22px;
	}

	.arrows {
		display: flex;
		margin-left: 2px;
		width: 34px;
		height: 18px;
		background: #fff;
		border: 1px solid #ddd;
		box-sizing: border-box;
		justify-content: space-around;
		align-items: center;
	}

	.arrows b {
		font-size: 8px;
		font-weight: 400;
	}

	.tree {
		flex: 1;
		min-height: 0;
		position: relative;
		margin: 0 6px 0 5px;
		border-left: 1px solid #f0f0f0;
		border-right: 1px solid #e8e8e8;
		padding-top: 5px;
		font-size: 12px;
		letter-spacing: -0.32px;
		color: #444;
	}

	.tree-line {
		position: absolute;
		left: 30px;
		top: 32px;
		height: 318px;
		border-left: 1px dotted #aaa;
	}

	.row {
		height: 16px;
		display: flex;
		align-items: center;
		position: relative;
		white-space: pre;
	}

	.struct {
		padding-left: 5px;
		margin-bottom: 2px;
	}

	.rootrow {
		padding-left: 7px;
	}

	.minus {
		width: 8px;
		height: 8px;
		border: 1px solid #aaa;
		font-size: 9px;
		line-height: 8px;
		text-align: center;
		color: #555;
		margin-right: 9px;
	}

	.stack {
		margin: 0 5px 0 2px;
	}

	.leaf {
		padding-left: 31px;
	}

	.dots {
		width: 11px;
		border-top: 1px dotted #aaa;
		flex: none;
	}

	.bulb {
		width: 8px;
		height: 8px;
		border-radius: 50%;
		background: #dcd163;
		border: 1.500px solid #5c5a3e;
		flex: none;
	}

	.rootrow .bulb {
		margin-right: 0;
	}

	.leaf .bulb {
		margin-left: 1px;
	}

	.swatch {
		width: 12px;
		height: 14px;
		border: 1px solid #333;
		margin: 0 5px 0 6px;
		flex: none;
	}

	.leaf.sel {
		background: #66b9ff;
		color: #d5edff;
	}

	.bottom-tabs {
		height: 24px;
		flex: none;
		display: flex;
		border-top: 2px solid #a9c23f;
		border-bottom: 1px solid #ddd;
		box-sizing: border-box;
		font-size: 12px;
		color: #555;
		white-space: pre;
	}

	.btab {
		display: flex;
		align-items: center;
		padding: 0 7px;
		border-right: 1px solid #eee;
		flex: none;
		box-sizing: border-box;
	}

	.btab.on {
		background: #8fb31c;
		color: #dbe9ad;
		padding: 0 6px;
	}

	.left-tabs .btab.on {
		width: 124px;
		margin-left: 3px;
		justify-content: center;
	}

	/* center */
	.center {
		flex: 1;
		min-width: 0;
		display: flex;
		flex-direction: column;
	}

	.view-tabs {
		height: 31px;
		flex: none;
		box-sizing: border-box;
		display: flex;
		align-items: flex-end;
		border-bottom: 2px solid #a9c23f;
		border-top: 1px solid #e4e4e4;
		font-size: 12.500px;
		letter-spacing: -0.42px;
		color: #444;
		white-space: nowrap;
	}

	.view-tab {
		height: 23px;
		display: flex;
		align-items: center;
		gap: 3px;
		padding-left: 5px;
		box-sizing: border-box;
		flex: none;
	}

	.view-tab.on {
		background: #8fb31c;
		color: #dbe9ad;
	}

	.view-tb {
		height: 29px;
		flex: none;
		display: flex;
		align-items: center;
		padding: 0 1px 0 4px;
	}

	.view-tb .caret {
		margin: 0 3px 0 0;
		font-size: 8px;
	}

	.view-tb .sep {
		margin: 0 4px;
	}

	.vt {
		width: 21px;
		height: 21px;
		display: flex;
		align-items: center;
		justify-content: center;
		box-sizing: border-box;
		border: 1px solid transparent;
		flex: none;
	}

	.vt.selected {
		border-color: #5aa7e0;
		background: #eef6fc;
	}

	.vt-gap {
		width: 96px;
		flex: none;
	}

	.vm-label {
		font-size: 12.500px;
		color: #444;
		margin-right: 6px;
	}

	.vm-select {
		width: 216px;
		height: 16px;
		box-sizing: border-box;
		border: 1px solid #ccc;
		display: flex;
		justify-content: space-between;
		align-items: center;
		padding: 0 4px;
		font-size: 12.500px;
		color: #444;
	}

	.viewport {
		flex: 1;
		min-height: 0;
		position: relative;
		background: linear-gradient(180deg, #6e7d97 0%, #8e9ab0 25%, #b4bccb 50%, #d6dae2 75%, #f5f6f8 100%);
		overflow: hidden;
	}

	.split-h {
		height: 4px;
		flex: none;
		padding-left: 535px;
	}

	.split-h i {
		display: block;
		width: 28px;
		height: 2px;
		margin-top: 2px;
		background: #a9c23f;
	}

	.scene {
		display: block;
		width: 100%;
		height: 100%;
	}

	.navcube {
		position: absolute;
		top: 24px;
		right: 27px;
	}

	.cube-top {
		font: italic 700 8px 'Liberation Sans', sans-serif;
		fill: #555;
	}

	.cube-front {
		font: italic 700 11px 'Liberation Sans', sans-serif;
		fill: #444;
	}

	/* right */
	.right {
		width: 540px;
		flex: none;
		display: flex;
		flex-direction: column;
		position: relative;
	}

	.greenline {
		border-top: 2px solid #a9c23f;
		margin-top: 3px;
		height: 30px;
		padding-top: 2px;
	}

	.prop-tabs {
		height: 22px;
		flex: none;
		display: flex;
		align-items: stretch;
		background: #e4e4e4;
		margin: 0 0 0 2px;
		font-size: 11.500px;
		letter-spacing: -0.5px;
		color: #444;
		white-space: nowrap;
	}

	.ptab {
		display: flex;
		align-items: center;
		gap: 6px;
		padding: 0 6px;
	}

	.ptab.active {
		background: #fff;
	}

	.prop-tb {
		height: 26px;
		flex: none;
		display: flex;
		align-items: center;
		gap: 4px;
		padding: 0 3px 0 7px;
		font-size: 12.500px;
		letter-spacing: -0.2px;
		color: #444;
		margin-top: 2px;
		background: linear-gradient(#fff, #f6f6f6);
	}

	.prop-tb .sep {
		margin: 0 4px;
	}

	.prop-tb .groups-caret {
		margin: 0 0 0 6px;
	}

	.prop-head {
		height: 18px;
		flex: none;
		display: flex;
		align-items: center;
		padding-left: 9px;
		font-size: 12.500px;
		letter-spacing: -0.2px;
		color: #333;
		margin-top: 3px;
	}

	.prop-head .pname {
		width: 268px;
	}

	.prop-head .star {
		width: 19px;
	}

	.prop-list {
		flex: 1;
		min-height: 0;
		overflow: hidden;
		margin: 0 11px 0 5px;
		font-size: 12px;
		letter-spacing: -0.28px;
		color: #333;
	}

	.prow {
		height: 13px;
		line-height: 13px;
		display: flex;
		padding-left: 26px;
		white-space: pre;
	}

	.prow .pname {
		width: 267px;
		flex: none;
	}

	.prow.dim {
		color: #aaa;
	}

	.prow.sel {
		background: #0a78d2;
		color: #cfe6ff;
		margin-left: 5px;
		padding-left: 21px;
	}

	.prow.section {
		background: #aad3e3;
		color: #2f4a58;
		font-weight: 700;
		padding-left: 8px;
		letter-spacing: 0;
	}

	.toggle {
		width: 8px;
		height: 8px;
		border: 1px solid #777;
		margin: 1px 9px 0 0;
		line-height: 8px;
		text-align: center;
		font-weight: 400;
		font-size: 9px;
	}

	.thumb {
		position: absolute;
		right: 2px;
		top: 339px;
		width: 3px;
		height: 123px;
		background: #bbb;
	}

	.right .bottom-tabs {
		margin-left: 1px;
	}

	.right .btab.on {
		width: 68px;
		justify-content: center;
		padding: 0;
	}

	/* annotations */
	.notes {
		position: absolute;
		inset: 0;
		width: 2560px;
		height: 914px;
		pointer-events: none;
	}

	.badge {
		position: absolute;
		left: 738px;
		top: 170px;
		width: 111px;
		height: 66px;
		box-sizing: border-box;
		background: #93ab3b;
		border: 3px solid #1d3a55;
		border-radius: 12px;
		display: flex;
		align-items: center;
		justify-content: center;
		font-size: 29px;
		color: #111;
		padding-top: 4px;
	}
</style>
